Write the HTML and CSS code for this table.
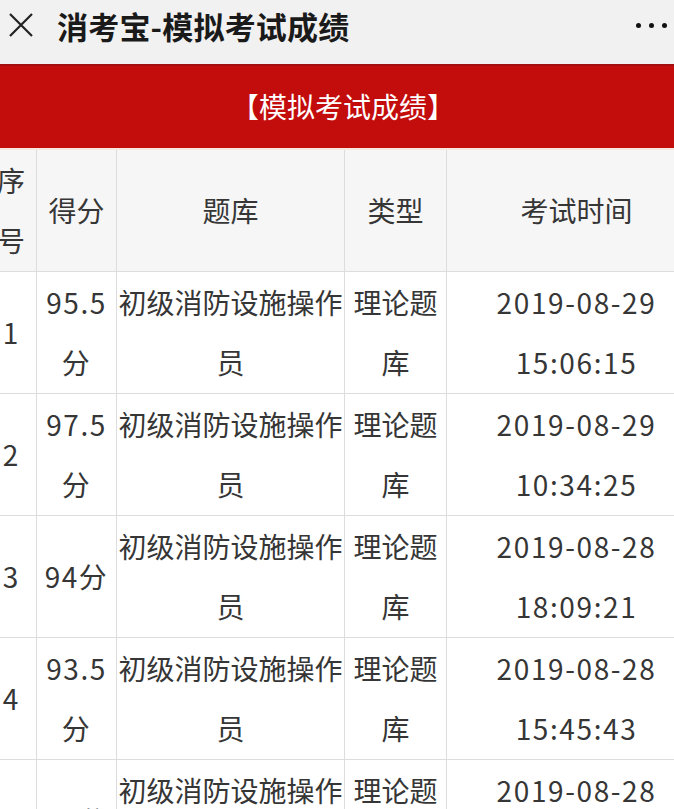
FILE: index.html
```html
<!DOCTYPE html>
<html lang="zh-CN">
<head>
<meta charset="utf-8">
<title>消考宝-模拟考试成绩</title>
<link rel="stylesheet" href="styles.css">
</head>
<body>
<header class="topbar">
  <svg class="close" width="26" height="26" viewBox="0 0 26 26"><path d="M2 2 L24 24 M24 2 L2 24" stroke="#222" stroke-width="2.2" fill="none"/></svg>
  <h1 class="title">消考宝-模拟考试成绩</h1>
  <div class="more"><span></span><span></span><span></span></div>
</header>
<div class="banner">【模拟考试成绩】</div>
<div class="table-wrap">
<table class="scores">
  <colgroup>
    <col class="c1"><col class="c2"><col class="c3"><col class="c4"><col class="c5">
  </colgroup>
  <thead>
    <tr><th>序号</th><th>得分</th><th>题库</th><th>类型</th><th>考试时间</th></tr>
  </thead>
  <tbody>
    <tr><td>1</td><td>95.5分</td><td>初级消防设施操作员</td><td>理论题库</td><td>2019-08-29 15:06:15</td></tr>
    <tr><td>2</td><td>97.5分</td><td>初级消防设施操作员</td><td>理论题库</td><td>2019-08-29 10:34:25</td></tr>
    <tr><td>3</td><td>94分</td><td>初级消防设施操作员</td><td>理论题库</td><td>2019-08-28 18:09:21</td></tr>
    <tr><td>4</td><td>93.5分</td><td>初级消防设施操作员</td><td>理论题库</td><td>2019-08-28 15:45:43</td></tr>
    <tr><td>5</td><td>96分</td><td>初级消防设施操作员</td><td>理论题库</td><td>2019-08-28 14:20:37</td></tr>
  </tbody>
</table>
</div>
</body>
</html>
```
FILE: styles.css
```css
html, body {
  margin: 0;
  padding: 0;
  overflow: hidden;
  background: #ffffff;
  font-family: "Noto Sans CJK SC", "Noto Sans", sans-serif;
}
.topbar {
  height: 64px;
  background: #f1f1f1;
  display: flex;
  align-items: center;
  padding: 0 0 0 8px;
}
.close {
  flex: none;
  margin-top: -14px;
}
.title {
  margin: -14px 0 0 23px;
  font-size: 31px;
  font-weight: 700;
  color: #1a1a1a;
  letter-spacing: 0.2px;
  flex: 1;
}
.more {
  display: flex;
  gap: 8px;
  margin: -14px 7px 0 0;
}
.more span {
  width: 5px;
  height: 5px;
  border-radius: 50%;
  background: #111;
}
.banner {
  height: 84px;
  background: #c30c0c;
  border-top: 2px solid #a30e0e;
  box-sizing: border-box;
  color: #ffffff;
  font-size: 28px;
  text-align: center;
  line-height: 80px;
  padding-left: 12px;
}
.table-wrap {
  overflow: hidden;
  border-top: 2px solid #f6e7df;
}
.scores {
  margin-left: -16px;
  width: 722px;
  table-layout: fixed;
  border-collapse: collapse;
  font-size: 28px;
  color: #363636;
}
.c1 { width: 52px; }
.c2 { width: 80px; }
.c3 { width: 228px; }
.c4 { width: 102px; }
.c5 { width: 260px; }
.scores th,
.scores td {
  border: 1px solid #dddddd;
  text-align: center;
  font-weight: 400;
  line-height: 60px;
  height: 122px;
  box-sizing: border-box;
  padding: 0 8px;
  vertical-align: middle;
}
.scores th:nth-child(1),
.scores td:nth-child(1) { padding: 0 12px; }
.scores td:nth-child(2) { letter-spacing: 1.5px; padding: 0 6px; }
.scores th:nth-child(3),
.scores td:nth-child(3) { padding: 0; }
.scores td:nth-child(5) { padding: 0 40px; letter-spacing: 1.6px; }
.scores thead th { height: 121px; }
.scores thead tr { background: #f6f6f6; }
.scores tbody tr { background: #ffffff; }
.scores thead th { border-top: 0; }
```
